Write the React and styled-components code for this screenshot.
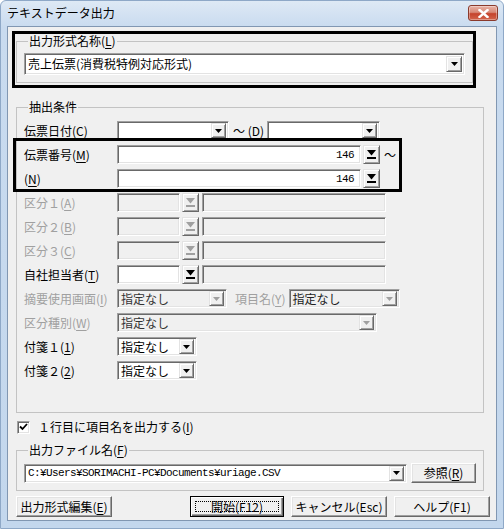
import React from 'react';
import styled, { createGlobalStyle } from 'styled-components';

const GlobalStyle = createGlobalStyle`
  html, body {
    margin: 0;
    padding: 0;
    background: #fff;
  }
  body {
    font-family: "Noto Sans CJK JP", sans-serif;
    font-size: 12px;
    line-height: 14px;
    color: #000;
  }
`;

const Window = styled.div`
  width: 504px;
  height: 529px;
  box-sizing: border-box;
  border: 1px solid #8ea8c7;
  border-radius: 6px 6px 0 0;
  padding: 0 6px 7px 6px;
  background: linear-gradient(to bottom, #dee9f5 0, #c9dbef 26px, #c3d7ed 100%);
  display: flex;
  flex-direction: column;
`;

const TitleBar = styled.div`
  height: 25px;
  display: flex;
  align-items: flex-start;
  justify-content: space-between;
`;

const Title = styled.span`
  margin: 5px 0 0 0;
`;

const CloseBtn = styled.span`
  width: 30px;
  height: 16px;
  margin: 4px -1px 0 0;
  box-sizing: border-box;
  border: 1px solid #8a3a2c;
  border-radius: 3px;
  background: linear-gradient(to bottom, #e8b2a6 0, #d88a78 45%, #c5432c 55%, #d2664d 100%);
  box-shadow: inset 0 0 0 1px rgba(255, 255, 255, 0.35);
  display: flex;
  align-items: center;
  justify-content: center;
`;

const Client = styled.div`
  flex: 1;
  box-sizing: border-box;
  background: #f0f0f0;
  border: 1px solid #8197b2;
  padding: 0 12px 0 8px;
  display: flex;
  flex-direction: column;
`;

const Callout = styled.div`
  box-sizing: border-box;
  border: 3px solid #000;
`;

const TopCallout = styled(Callout)`
  width: 464px;
  margin: 4px 0 0 -4px;
`;

const RowCallout = styled(Callout)`
  width: 389px;
  margin: -7px 0 -4px -11px;
  padding: 4px 0 1px 8px;
  display: flex;
  flex-direction: column;
  gap: 5px;
`;

const Group = styled.fieldset`
  margin: ${p => p.$m || '0'};
  padding: 0 0 ${p => p.$pb || 0}px 7px;
  width: ${p => p.$w}px;
  box-sizing: border-box;
  border: 1px solid #c3c3c3;
  min-width: 0;
`;

const Legend = styled.legend`
  margin-left: 4px;
  padding: 0 1px;
  line-height: 14px;
  color: #000;
`;

const Rows = styled.div`
  margin-top: 7px;
  display: flex;
  flex-direction: column;
  gap: 5px;
`;

const Row = styled.div`
  display: flex;
  align-items: center;
  height: 19px;
`;

const Label = styled.span`
  width: ${p => p.$w || 93}px;
  flex: none;
  white-space: nowrap;
  color: ${p => (p.$off ? '#a0a0a0' : '#000')};
`;

const Mn = styled.u`
  text-decoration-thickness: 1px;
  text-underline-offset: 2px;
`;

const Field = styled.div`
  box-sizing: border-box;
  width: ${p => p.$w}px;
  height: ${p => p.$h || 19}px;
  flex: none;
  margin-left: ${p => p.$ml || 0}px;
  display: flex;
  align-items: center;
  justify-content: ${p => (p.$right ? 'flex-end' : 'flex-start')};
  background: ${p => (p.$off ? '#f0f0f0' : '#fff')};
  border: 1px solid;
  border-color: #a0a0a0 #fff #fff #a0a0a0;
  box-shadow: inset 1px 1px 0 #696969, inset -1px -1px 0 #e3e3e3;
  padding: 0 ${p => (p.$right ? 6 : 2)}px 0 3px;
  color: ${p => (p.$ink ? p.$ink : '#000')};
  white-space: nowrap;
`;

const FieldText = styled.span`
  flex: 1;
  line-height: 16px;
`;

const MonoText = styled.span`
  font-family: "Liberation Mono", monospace;
  font-size: 11px;
  line-height: 14px;
  letter-spacing: -0.6px;
  flex: ${p => (p.$grow ? 1 : 'none')};
`;

const ArrowFace = styled.span`
  width: ${p => p.$w || 15}px;
  height: ${p => p.$h || 15}px;
  box-sizing: border-box;
  flex: none;
  margin-left: ${p => p.$ml || 0}px;
  background: #f0f0f0;
  border: 1px solid;
  border-color: #e3e3e3 #696969 #696969 #e3e3e3;
  box-shadow: inset 1px 1px 0 #fff, inset -1px -1px 0 #a0a0a0;
  display: flex;
  align-items: center;
  justify-content: center;
`;

const Sep = styled.span`
  margin: 0 3px 0 ${p => p.$gap || 4}px;
  white-space: nowrap;
  color: ${p => (p.$off ? '#a0a0a0' : '#000')};
`;

const CheckRow = styled.label`
  margin: 7px 0 0 1px;
  height: 14px;
  display: flex;
  align-items: center;
  gap: 8px;
`;

const CheckBox = styled.span`
  width: 13px;
  height: 13px;
  box-sizing: border-box;
  background: #fff;
  border: 1px solid;
  border-color: #a0a0a0 #fff #fff #a0a0a0;
  box-shadow: inset 1px 1px 0 #696969, inset -1px -1px 0 #e3e3e3;
  display: flex;
  align-items: center;
  justify-content: center;
`;

const FileRow = styled.div`
  margin: 6px 0 0 0;
  display: flex;
  align-items: center;
  gap: 4px;
`;

const Button = styled.button`
  width: ${p => p.$w}px;
  height: ${p => p.$h || 21}px;
  box-sizing: border-box;
  padding: 0;
  font: inherit;
  color: #000;
  background: #f0f0f0;
  border: 1px solid;
  border-color: ${p => (p.$focus ? '#000' : '#fff #696969 #696969 #fff')};
  box-shadow: ${p =>
    p.$focus
      ? 'inset 1px 1px 0 #fff, inset -1px -1px 0 #696969, inset -2px -2px 0 #a0a0a0'
      : 'inset -1px -1px 0 #a0a0a0, inset 1px 1px 0 #e3e3e3'};
  display: flex;
  align-items: center;
  justify-content: center;
  white-space: nowrap;
`;

const FocusRing = styled.span`
  box-sizing: border-box;
  width: calc(100% - 8px);
  height: calc(100% - 8px);
  border: 1px dotted #000;
  display: flex;
  align-items: center;
  justify-content: center;
`;

const BottomBar = styled.div`
  margin: 5px -6px 0 0;
  display: flex;
  align-items: center;
  gap: 7px;
`;

const Spacer = styled.span`
  flex: 1;
`;

const ComboArrow = ({ off, w, h }) => (
  <ArrowFace $w={w} $h={h}>
    <svg width="7" height="4" viewBox="0 0 7 4">
      <polygon points="0,0 7,0 3.5,4" fill={off ? '#a0a0a0' : '#000'} />
    </svg>
  </ArrowFace>
);

const SearchBtn = ({ off }) => (
  <ArrowFace $w={17} $h={19} $ml={2}>
    <svg width="9" height="9" viewBox="0 0 9 9">
      <polygon points="0,0 9,0 4.5,5.5" fill={off ? '#a0a0a0' : '#000'} />
      <rect x="0" y="7" width="9" height="2" fill={off ? '#a0a0a0' : '#000'} />
    </svg>
  </ArrowFace>
);

const Combo = ({ w, off, ink, text, h, aw, ah }) => (
  <Field $w={w} $off={off} $ink={ink} $h={h}>
    <FieldText>{text}</FieldText>
    <ComboArrow off={off} w={aw} h={ah} />
  </Field>
);

const KubunRow = ({ label, mn, off }) => (
  <Row>
    <Label $off={off}>
      {label}(<Mn>{mn}</Mn>)
    </Label>
    <Field $w={63} $off={off} />
    <SearchBtn off={off} />
    <Field $w={184} $off $ml={3} />
  </Row>
);

export default function App() {
  return (
    <>
      <GlobalStyle />
      <Window>
        <TitleBar>
          <Title>テキストデータ出力</Title>
          <CloseBtn>
            <svg width="11" height="9" viewBox="0 0 11 9">
              <path d="M1.5 1 L9.5 8 M9.5 1 L1.5 8" stroke="#fff" strokeWidth="2.4" strokeLinecap="square" />
            </svg>
          </CloseBtn>
        </TitleBar>
        <Client>
          <TopCallout>
            <Group $w={457} $m="0 0 2px 1px" $pb={7}>
              <Legend>
                出力形式名称(<Mn>L</Mn>)
              </Legend>
              <Field $w={441} $h={22} style={{ marginTop: 5 }}>
                <FieldText>売上伝票(消費税特例対応形式)</FieldText>
                <ComboArrow w={16} h={16} />
              </Field>
            </Group>
          </TopCallout>

          <Group $w={468} $m="12px 0 0 0" $pb={32}>
            <Legend>抽出条件</Legend>
            <Rows>
              <Row>
                <Label>
                  伝票日付(<Mn>C</Mn>)
                </Label>
                <Combo w={112} />
                <Sep>
                  ～ (<Mn>D</Mn>)
                </Sep>
                <Combo w={113} />
              </Row>
              <RowCallout>
                <Row>
                  <Label>
                    伝票番号(<Mn>M</Mn>)
                  </Label>
                  <Field $w={244} $right>
                    <MonoText>146</MonoText>
                  </Field>
                  <SearchBtn />
                  <Sep>～</Sep>
                </Row>
                <Row>
                  <Label>
                    (<Mn>N</Mn>)
                  </Label>
                  <Field $w={244} $right>
                    <MonoText>146</MonoText>
                  </Field>
                  <SearchBtn />
                </Row>
              </RowCallout>
              <KubunRow label="区分１" mn="A" off />
              <KubunRow label="区分２" mn="B" off />
              <KubunRow label="区分３" mn="C" off />
              <KubunRow label="自社担当者" mn="T" />
              <Row>
                <Label $off>
                  摘要使用画面(<Mn>I</Mn>)
                </Label>
                <Combo w={110} off ink="#333" text="指定なし" />
                <Sep $off $gap={8}>
                  項目名(<Mn>Y</Mn>)
                </Sep>
                <Combo w={111} off ink="#222" text="指定なし" />
              </Row>
              <Row>
                <Label $off>
                  区分種別(<Mn>W</Mn>)
                </Label>
                <Combo w={260} off ink="#333" text="指定なし" />
              </Row>
              <Row>
                <Label>
                  付箋１(<Mn>1</Mn>)
                </Label>
                <Combo w={80} text="指定なし" />
              </Row>
              <Row>
                <Label>
                  付箋２(<Mn>2</Mn>)
                </Label>
                <Combo w={80} text="指定なし" />
              </Row>
            </Rows>
          </Group>

          <CheckRow>
            <CheckBox>
              <svg width="9" height="8" viewBox="0 0 9 8">
                <path d="M1 3.5 L3.5 6 L8 1" stroke="#000" strokeWidth="1.8" fill="none" />
              </svg>
            </CheckBox>
            <span>
              １行目に項目名を出力する(<Mn>I</Mn>)
            </span>
          </CheckRow>

          <Group $w={468} $m="9px 0 0 0" $pb={7}>
            <Legend>
              出力ファイル名(<Mn>F</Mn>)
            </Legend>
            <FileRow>
              <Field $w={383}>
                <MonoText $grow>C:¥Users¥SORIMACHI-PC¥Documents¥uriage.CSV</MonoText>
                <ComboArrow />
              </Field>
              <Button $w={65} $h={20}>
                参照(<Mn>R</Mn>)
              </Button>
            </FileRow>
          </Group>

          <BottomBar>
            <Button $w={96}>
              出力形式編集(<Mn>E</Mn>)
            </Button>
            <Spacer />
            <Button $w={94} $focus>
              <FocusRing>開始(F12)</FocusRing>
            </Button>
            <Button $w={96}>キャンセル(Esc)</Button>
            <Button $w={96}>ヘルプ(F1)</Button>
          </BottomBar>
        </Client>
      </Window>
    </>
  );
}
